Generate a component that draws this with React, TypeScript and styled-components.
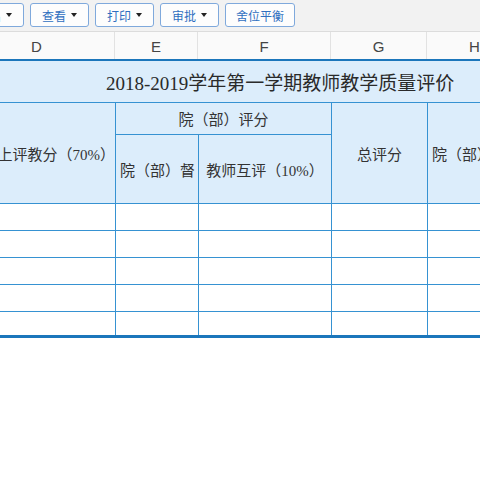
import React from "react";
import styled, { createGlobalStyle } from "styled-components";

const Global = createGlobalStyle`
  html, body { margin: 0; padding: 0; background: #ffffff; }
  body { width: 480px; height: 480px; overflow: hidden; font-family: "Liberation Sans", "Noto Sans CJK SC", sans-serif; }
`;

const Page = styled.div`
  width: 480px;
  height: 480px;
  overflow: hidden;
  background: #ffffff;
`;

const Toolbar = styled.div`
  height: 32px;
  background: #f2f2f2;
  border-bottom: 1px solid #dcdcdc;
  box-sizing: border-box;
  overflow: hidden;
`;

const ToolRow = styled.div`
  display: flex;
  gap: 6px;
  margin-left: -35px;
  padding-top: 3px;
`;

const ToolButton = styled.div<{ $w: number }>`
  width: ${(p) => p.$w}px;
  height: 24px;
  box-sizing: border-box;
  flex: none;
  border: 1px solid #7fa9dc;
  border-radius: 3px;
  background: #fdfdfd;
  display: flex;
  align-items: center;
  justify-content: center;
  gap: 5px;
  color: #2f6fc0;
  font-size: 12px;
  font-family: "Noto Sans CJK SC", sans-serif;
`;

const Caret = styled.span`
  width: 0;
  height: 0;
  border-left: 3px solid transparent;
  border-right: 3px solid transparent;
  border-top: 4px solid #222;
`;

const Sheet = styled.div`
  margin-left: -41px;
  width: 564px;
`;

const LetterRow = styled.div`
  display: flex;
  height: 27px;
  background: #fafafa;
`;

const Letter = styled.div<{ $w: number }>`
  width: ${(p) => p.$w}px;
  flex: none;
  box-sizing: border-box;
  border-right: 1px solid #e2e2e2;
  display: flex;
  align-items: center;
  justify-content: center;
  padding-top: 2px;
  color: #444;
  font-size: 15px;
  font-family: "Liberation Sans", sans-serif;
`;

const Table = styled.table`
  border-collapse: collapse;
  table-layout: fixed;
  width: 564px;
  border-top: 2px solid #1b76bb;
  border-bottom: 3px solid #1b76bb;
  font-family: "Liberation Serif", "Noto Sans CJK SC", serif;
  color: #333;
`;

const Cell = styled.td<{ $align?: string; $h?: number; $blank?: boolean }>`
  border: 1px solid #3692d2;
  background: ${(p) => (p.$blank ? "#ffffff" : "#dcedfb")};
  height: ${(p) => (p.$h ? `${p.$h}px` : "auto")};
  padding: 0 4px;
  text-align: ${(p) => p.$align || "center"};
  vertical-align: middle;
  font-size: 15px;
  white-space: nowrap;
  overflow: hidden;
  box-sizing: border-box;
`;

const Clip = styled.div<{ $w: number }>`
  width: ${(p) => p.$w}px;
  overflow: hidden;
  white-space: nowrap;
`;

const TitleCell = styled.td`
  border: 1px solid #3692d2;
  border-top: none;
  background: #dcedfb;
  height: 41px;
  padding: 0 0 0 146px;
  text-align: left;
  font-size: 19px;
  white-space: nowrap;
  overflow: hidden;
  color: #2a2a2a;
`;

const widths = [156, 83, 133, 96, 96];
const letters = ["D", "E", "F", "G", "H"];

export default function App() {
  return (
    <Page>
      <Global />
      <Toolbar>
        <ToolRow>
          <ToolButton $w={59}>导出<Caret /></ToolButton>
          <ToolButton $w={59}>查看<Caret /></ToolButton>
          <ToolButton $w={59}>打印<Caret /></ToolButton>
          <ToolButton $w={59}>审批<Caret /></ToolButton>
          <ToolButton $w={70}>舍位平衡</ToolButton>
        </ToolRow>
      </Toolbar>
      <Sheet>
        <LetterRow>
          {letters.map((l, i) => (
            <Letter key={l} $w={widths[i]}>{l}</Letter>
          ))}
        </LetterRow>
        <Table>
          <colgroup>
            {widths.map((w, i) => (
              <col key={i} style={{ width: w }} />
            ))}
          </colgroup>
          <tbody>
            <tr>
              <TitleCell colSpan={5}>2018-2019学年第一学期教师教学质量评价</TitleCell>
            </tr>
            <tr>
              <Cell rowSpan={2} $align="right" style={{ paddingRight: 0 }}>网上评教分（70%）</Cell>
              <Cell colSpan={2} $h={32}>院（部）评分</Cell>
              <Cell rowSpan={2}>总评分</Cell>
              <Cell rowSpan={2} $align="left">院（部）评价</Cell>
            </tr>
            <tr>
              <Cell $h={69} $align="left">
                <Clip $w={75}>院（部）督导评分（20%）</Clip>
              </Cell>
              <Cell>教师互评（10%）</Cell>
            </tr>
            {[27, 27, 27, 27, 25].map((h, r) => (
              <tr key={r}>
                {widths.map((_, c) => (
                  <Cell key={c} $blank $h={h} />
                ))}
              </tr>
            ))}
          </tbody>
        </Table>
      </Sheet>
    </Page>
  );
}
